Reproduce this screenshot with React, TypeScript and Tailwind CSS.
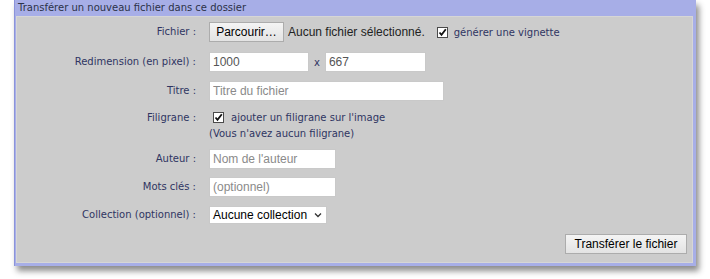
import { ReactNode } from 'react';

const label = "w-[181px] shrink-0 pr-[2px] text-right font-['DejaVu_Sans',Verdana,sans-serif] text-[10px] leading-[14px] text-[#2f3562]";
const input =
  "h-[20px] border border-[#c9c9c9] bg-white px-[3px] font-['Liberation_Sans',Arial,sans-serif] text-[12px] text-[#555] placeholder:text-[#8a8a8a] outline-none";
const button =
  "h-[20px] border border-[#acacac] bg-gradient-to-b from-[#f4f4f4] to-[#e3e3e3] font-['Liberation_Sans',Arial,sans-serif] text-[12px] leading-none text-black whitespace-nowrap";

function CheckBox() {
  return (
    <span className="flex h-[11px] w-[11px] shrink-0 items-center justify-center border border-[#4a4a4a] bg-white">
      <svg width="9" height="9" viewBox="0 0 9 9">
        <path d="M1.5 4.5 L3.5 6.8 L7.8 1.2" fill="none" stroke="#111" strokeWidth="1.8" />
      </svg>
    </span>
  );
}

function Row({ name, children, className = '' }: { name: string; children: ReactNode; className?: string }) {
  return (
    <div className={`flex items-center ${className}`}>
      <span className={label}>{name}</span>
      <div className="ml-[11px] flex items-center">{children}</div>
    </div>
  );
}

export default function App() {
  return (
    <div className="h-[279px] w-[710px] bg-white">
      <div className="ml-[14px] w-[682px] border-l border-[#8b93d9] bg-[#a7aee7] pb-[3px] pl-[1px] pr-[3px] shadow-[3px_5px_6px_rgba(0,0,0,0.45)]">
        <div className="h-[16px] pl-[2px] pt-[2px] font-['DejaVu_Sans',Verdana,sans-serif] text-[10px] leading-[12px] text-[#2c3248]">
          Transférer un nouveau fichier dans ce dossier
        </div>
        <div className="flex h-[247px] flex-col border border-[#d6d6d6] bg-[#cccccc] pt-[5px]">
          <Row name="Fichier :">
            <button className={`${button} w-[75px]`}>Parcourir…</button>
            <span className="ml-[4px] whitespace-nowrap font-['Liberation_Sans',Arial,sans-serif] text-[12px] text-[#222]">
              Aucun fichier sélectionné.
            </span>
            <span className="ml-[12px]">
              <CheckBox />
            </span>
            <span className="ml-[6px] font-['DejaVu_Sans',Verdana,sans-serif] text-[10px] text-[#2f3562]">
              générer une vignette
            </span>
          </Row>

          <Row name="Redimension (en pixel) :" className="mt-[10px]">
            <input className={`${input} w-[100px]`} defaultValue="1000" />
            <span className="mx-[5px] font-['DejaVu_Sans',Verdana,sans-serif] text-[10px] text-[#2f3562]">x</span>
            <input className={`${input} w-[101px]`} defaultValue="667" />
          </Row>

          <Row name="Titre :" className="mt-[9px]">
            <input className={`${input} w-[235px]`} placeholder="Titre du fichier" />
          </Row>

          <div className="mt-[9px] flex items-start">
            <span className={`${label} pt-[1px]`}>Filigrane :</span>
            <div className="ml-[11px] flex flex-col font-['DejaVu_Sans',Verdana,sans-serif] text-[10px] leading-[14px] text-[#2f3562]">
              <div className="flex h-[14px] items-center pl-[4px]">
                <CheckBox />
                <span className="ml-[7px] pt-[2px]">ajouter un filigrane sur l'image</span>
              </div>
              <span className="mt-[3px] h-[14px]">(Vous n'avez aucun filigrane)</span>
            </div>
          </div>

          <Row name="Auteur :" className="mt-[8px]">
            <input className={`${input} w-[127px]`} placeholder="Nom de l'auteur" />
          </Row>

          <Row name="Mots clés :" className="mt-[8px]">
            <input className={`${input} w-[127px]`} placeholder="(optionnel)" />
          </Row>

          <Row name="Collection (optionnel) :" className="mt-[9px]">
            <div className="flex h-[18px] w-[118px] items-center justify-between whitespace-nowrap border border-[#c9c9c9] bg-white pl-[3px] pr-[4px] font-['Liberation_Sans',Arial,sans-serif] text-[12px] text-black">
              <span>Aucune collection</span>
              <svg width="8" height="6" viewBox="0 0 8 6">
                <path d="M1 1.5 L4 4.5 L7 1.5" fill="none" stroke="#333" strokeWidth="1.3" />
              </svg>
            </div>
          </Row>

          <div className="mt-[10px] flex justify-end pr-[5px]">
            <button className={`${button} w-[122px]`}>Transférer le fichier</button>
          </div>
        </div>
      </div>
    </div>
  );
}
